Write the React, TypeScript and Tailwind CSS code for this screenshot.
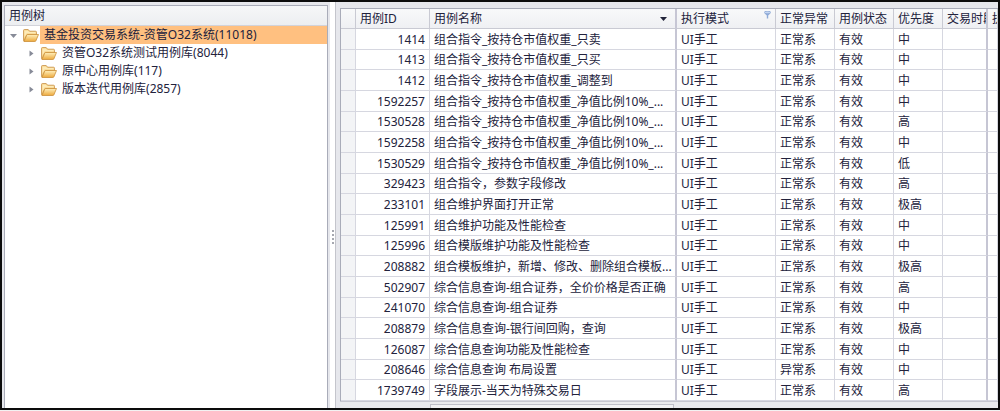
interface TestCase {
  id: number;
  name: string;
  kind: string;
  priority: string;
}

interface TreeNode {
  label: string;
  count: number;
}

const ROOT_NODE: TreeNode = { label: "基金投资交易系统-资管O32系统", count: 11018 };

const CHILD_NODES: TreeNode[] = [
  { label: "资管O32系统测试用例库", count: 8044 },
  { label: "原中心用例库", count: 117 },
  { label: "版本迭代用例库", count: 2857 },
];

const CASES: TestCase[] = [
  { id: 1414, name: "组合指令_按持仓市值权重_只卖", kind: "正常系", priority: "中" },
  { id: 1413, name: "组合指令_按持仓市值权重_只买", kind: "正常系", priority: "中" },
  { id: 1412, name: "组合指令_按持仓市值权重_调整到", kind: "正常系", priority: "中" },
  { id: 1592257, name: "组合指令_按持仓市值权重_净值比例10%_...", kind: "正常系", priority: "中" },
  { id: 1530528, name: "组合指令_按持仓市值权重_净值比例10%_...", kind: "正常系", priority: "高" },
  { id: 1592258, name: "组合指令_按持仓市值权重_净值比例10%_...", kind: "正常系", priority: "中" },
  { id: 1530529, name: "组合指令_按持仓市值权重_净值比例10%_...", kind: "正常系", priority: "低" },
  { id: 329423, name: "组合指令，参数字段修改", kind: "正常系", priority: "高" },
  { id: 233101, name: "组合维护界面打开正常", kind: "正常系", priority: "极高" },
  { id: 125991, name: "组合维护功能及性能检查", kind: "正常系", priority: "中" },
  { id: 125996, name: "组合模版维护功能及性能检查", kind: "正常系", priority: "中" },
  { id: 208882, name: "组合模板维护，新增、修改、删除组合模板...", kind: "正常系", priority: "极高" },
  { id: 502907, name: "综合信息查询-组合证券，全价价格是否正确", kind: "正常系", priority: "高" },
  { id: 241070, name: "综合信息查询-组合证券", kind: "正常系", priority: "中" },
  { id: 208879, name: "综合信息查询-银行间回购，查询", kind: "正常系", priority: "极高" },
  { id: 126087, name: "综合信息查询功能及性能检查", kind: "正常系", priority: "中" },
  { id: 208646, name: "综合信息查询 布局设置", kind: "异常系", priority: "中" },
  { id: 1739749, name: "字段展示-当天为特殊交易日", kind: "正常系", priority: "高" },
];

const HEAD = "overflow-hidden border-r border-b border-[#c9cad3] bg-linear-to-b from-[#f8f9fa] to-[#eff0f3] px-1 text-left font-normal";
const CELL = "overflow-hidden border-r border-b border-[#d6d7e0] px-1 pt-0.5";
// the last column of a fixed band has a heavier edge
const BAND = "border-r-2 border-r-[#c6c6d4]";

function FolderIcon() {
  return (
    <svg width="16" height="13" viewBox="0 0 16 13" className="shrink-0">
      <defs>
        <linearGradient id="folder" x1="0" y1="0" x2="0" y2="1">
          <stop offset="0" stopColor="#fff0bd" />
          <stop offset="1" stopColor="#eda93c" />
        </linearGradient>
      </defs>
      <path d="M0.5 11.5V1.5Q0.5 0.5 1.5 0.5H5.2L6.7 2.2H12.5Q13.5 2.2 13.5 3.2V6H4L1 12Z" fill="#f6cf80" stroke="#c8924a" strokeWidth="0.8" />
      <path d="M1.4 1.4H4.8L6.3 3.1H12.6V4.6H3.6L1.4 8.6Z" fill="#fdebb8" />
      <path d="M0.9 12.5L3.7 6.2Q4 5.5 4.7 5.5H15.5L12.9 11.8Q12.6 12.5 11.9 12.5Z" fill="url(#folder)" stroke="#cc8f38" strokeWidth="0.8" />
    </svg>
  );
}

function Expander({ open }: { open?: boolean }) {
  return (
    <button aria-label={open ? "折叠" : "展开"} className="flex w-4 shrink-0 items-center justify-center">
      <svg width="7" height="7" viewBox="0 0 7 7" fill="#878b98">
        {open ? <path d="M0 2H7L3.5 6Z" /> : <path d="M1.5 0.5V6.5L5.5 3.5Z" />}
      </svg>
    </button>
  );
}

function CaseTree() {
  return (
    <aside className="flex w-[324px] shrink-0 flex-col border border-b-0 border-[#a9acb9] bg-white">
      <h2 className="h-5 border-b border-[#d2d3da] bg-linear-to-b from-[#f6f7f8] to-[#eceef1] px-1 leading-5">用例树</h2>
      <ul className="leading-[18px]">
        <li>
          <div className="flex items-center">
            <Expander open />
            <span className="flex w-[19px] shrink-0 justify-center"><FolderIcon /></span>
            <span className="grow bg-[#ffc080] pl-1">{ROOT_NODE.label}({ROOT_NODE.count})</span>
          </div>
          <ul className="pl-[18px]">
            {CHILD_NODES.map((n) => (
              <li key={n.label} className="flex items-center">
                <Expander />
                <span className="flex w-[19px] shrink-0 justify-center"><FolderIcon /></span>
                <span className="pl-1">{n.label}({n.count})</span>
              </li>
            ))}
          </ul>
        </li>
      </ul>
    </aside>
  );
}

function CaseTable() {
  return (
    <table className="h-full w-full table-fixed border-separate border-spacing-0 border-t border-l border-[#a9acb9] bg-white leading-4 whitespace-nowrap">
      <colgroup>
        <col className="w-[15px]" />
        <col className="w-[74px]" />
        <col />
        <col className="w-[99px]" />
        <col className="w-[59px]" />
        <col className="w-[59px]" />
        <col className="w-[49px]" />
        <col className="w-[45px]" />
        <col className="w-[10px]" />
      </colgroup>
      <thead>
        <tr className="h-5">
          <th className={HEAD} />
          <th className={HEAD}>用例ID</th>
          <th className={`${HEAD} ${BAND}`}>
            <span className="flex items-center justify-between pr-1">
              用例名称
              <svg width="7" height="4" viewBox="0 0 7 4"><path d="M0 0H7L3.5 4Z" fill="#22243a" /></svg>
            </span>
          </th>
          <th className={HEAD}>
            <span className="flex items-start justify-between">
              执行模式
              <svg width="7" height="8" viewBox="0 0 7 8">
                <ellipse cx="3.5" cy="1.5" rx="3.3" ry="1.4" fill="#c4d6f2" stroke="#7e9ccb" strokeWidth="0.7" />
                <path d="M0.8 2.6L2.8 4.6V7.5H4.2V4.6L6.2 2.6Z" fill="#8eaad8" />
              </svg>
            </span>
          </th>
          <th className={HEAD}>正常异常</th>
          <th className={HEAD}>用例状态</th>
          <th className={HEAD}>优先度</th>
          <th className={`${HEAD} ${BAND}`}>交易时段</th>
          <th className={HEAD}>执</th>
        </tr>
      </thead>
      <tbody>
        {CASES.map((c) => (
          <tr key={c.id}>
            <td className={`${CELL} bg-[#f3f4f6]`} />
            <td className={`${CELL} text-right`}>{c.id}</td>
            <td className={`${CELL} ${BAND}`}>{c.name}</td>
            <td className={CELL}>UI手工</td>
            <td className={CELL}>{c.kind}</td>
            <td className={CELL}>有效</td>
            <td className={CELL}>{c.priority}</td>
            <td className={`${CELL} ${BAND}`} />
            <td className={CELL} />
          </tr>
        ))}
      </tbody>
    </table>
  );
}

export default function App() {
  return (
    <div className="h-screen bg-[#f2f2f2] pb-px font-['Noto_Sans','Noto_Sans_CJK_SC',sans-serif] text-[12px] text-[#22223c]">
      <div className="flex h-full overflow-hidden border-2 border-[#0c0c0c] bg-[#e6e7ec]">
        <div className="flex shrink-0 pt-[3px] pl-0.5">
          <CaseTree />
        </div>
        <div className="ml-0.5 flex w-[5px] shrink-0 items-center justify-center bg-white pt-16">
          <div className="h-[14px] border-l-2 border-dotted border-[#a6a8b0]" />
        </div>
        <main className="flex min-w-0 grow flex-col border-l border-[#c4c5cc] pt-[6px] pl-1">
          <div className="min-h-0 grow">
            <CaseTable />
          </div>
          <div className="flex h-[7px] shrink-0 border-t border-[#c6c7d0] bg-[#e9eaed] pt-0.5 pl-[90px]">
            <div className="w-[244px] border border-b-0 border-[#bfc0c9] bg-[#f1f2f4]" />
          </div>
        </main>
      </div>
    </div>
  );
}
